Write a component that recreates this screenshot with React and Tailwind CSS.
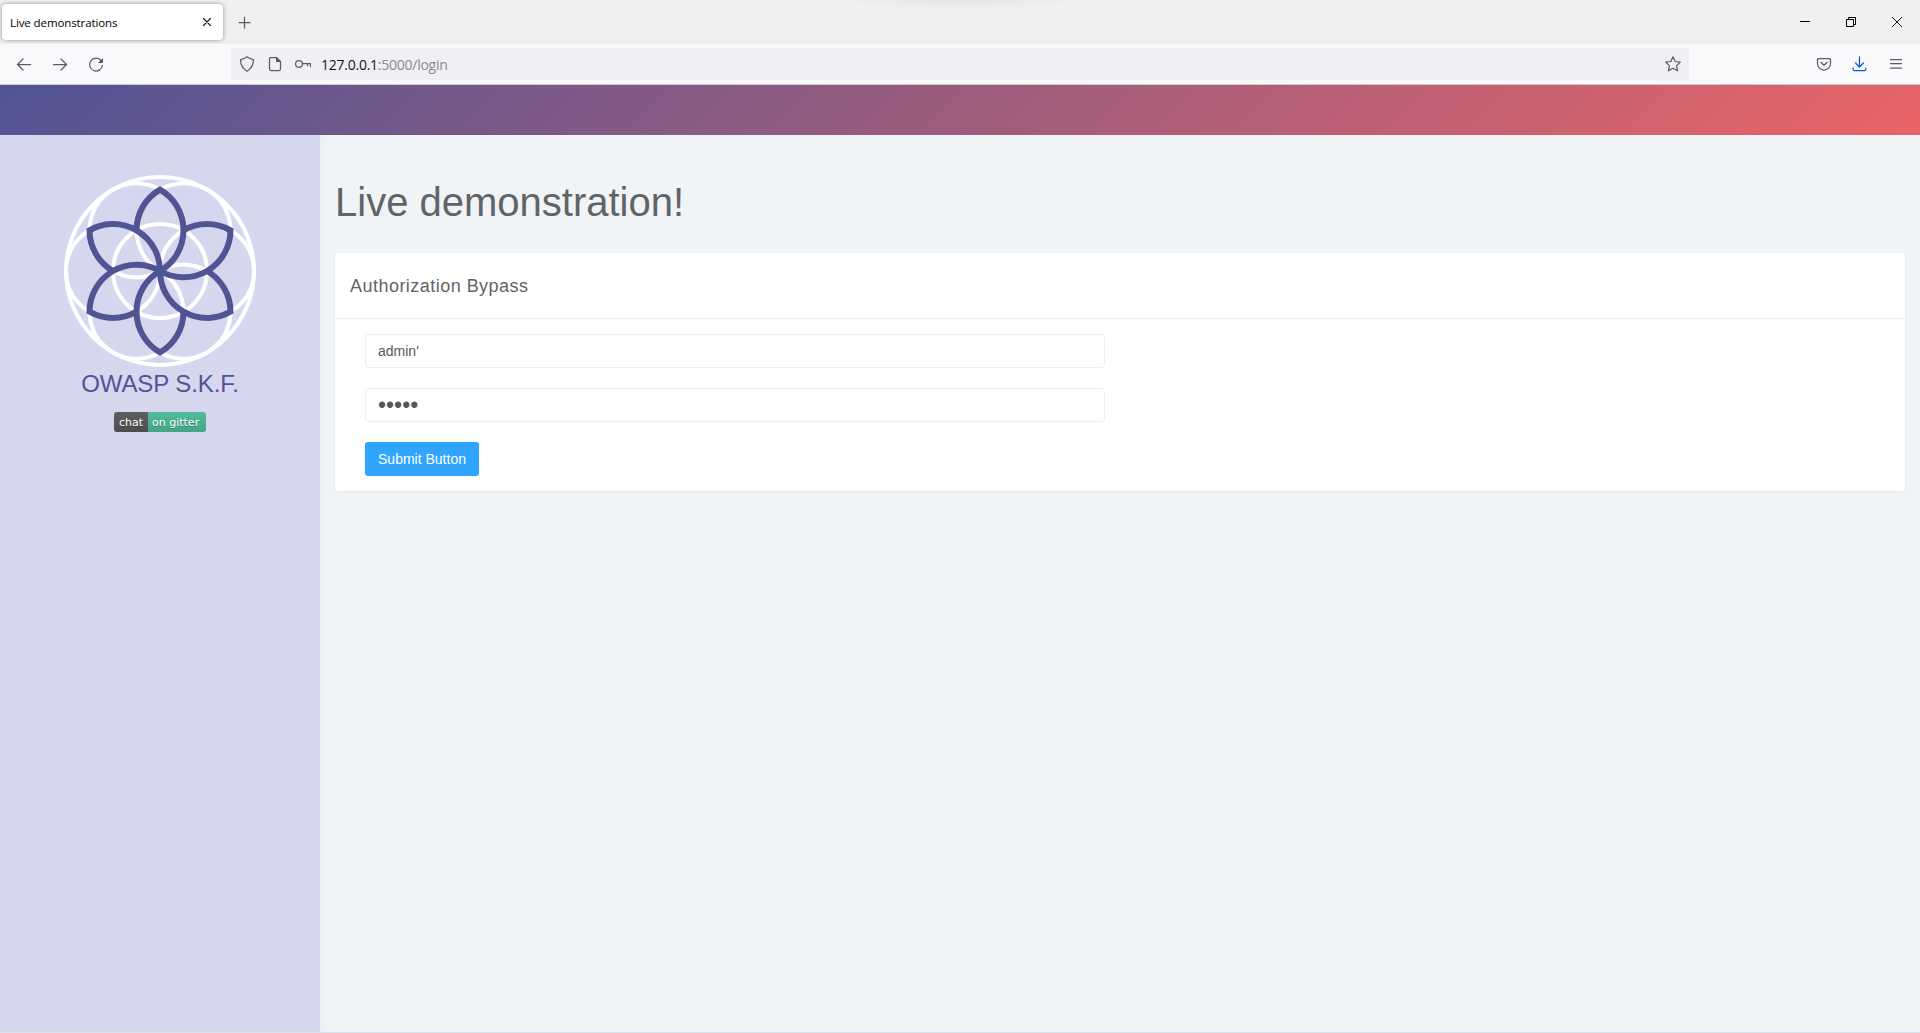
const petals = [0, 60, 120, 180, 240, 300];

function FlowerLogo() {
  return (
    <svg className="block h-[192px] w-[192px] shrink-0" viewBox="-96 -96 192 192" fill="none">
      <g stroke="#ffffff" strokeWidth="4">
        <circle r="94" />
        <circle r="47" />
        {petals.map((a) => (
          <circle key={a} cy="-47" r="47" transform={`rotate(${a + 30})`} />
        ))}
      </g>
      <g stroke="#505494" strokeWidth="6">
        {petals.map((a) => (
          <path key={a} d="M-23.5 -40.7A47 47 0 0 1 0 -81.4A47 47 0 0 1 0 0" transform={`rotate(${a})`} />
        ))}
      </g>
    </svg>
  );
}

function Icon({ children, className = "" }) {
  return (
    <svg
      className={`block h-4 w-4 shrink-0 ${className}`}
      viewBox="0 0 16 16"
      fill="none"
      stroke="currentColor"
      strokeWidth="1.25"
      strokeLinecap="round"
      strokeLinejoin="round"
    >
      {children}
    </svg>
  );
}

function TabStrip() {
  return (
    <div className="flex h-11 items-start bg-[#f0f0f0] bg-[radial-gradient(120px_8px_at_960px_0px,#e4e4e4,#f0f0f0)]">
      <div className="ml-[2px] mt-1 flex h-9 w-[221px] items-center justify-between rounded bg-white pl-2 pr-2 text-black shadow-[0_0_4px_rgba(0,0,0,0.4)]">
        <span className="mt-[2px] whitespace-nowrap font-['Open_Sans',sans-serif] text-[11.5px] tracking-[-0.1px]">Live demonstrations</span>
        <Icon className="text-[#15141a]"><path d="M4.500 4.500l7 7M11.500 4.500l-7 7" strokeWidth="1.1" /></Icon>
      </div>
      <div className="ml-[13px] mt-[14px] text-[#5b5b66]">
        <Icon><path d="M8.5 3v11M3 8.5h11" /></Icon>
      </div>
      <div className="ml-auto mr-[15px] mt-[14px] flex gap-[30px] text-black">
        <svg className="h-4 w-4" viewBox="0 0 16 16" shapeRendering="crispEdges"><path d="M3 7h10v1H3z" /></svg>
        <svg className="h-4 w-4" viewBox="0 0 16 16" fill="none" stroke="currentColor"><path d="M3.5 5.5h7v7h-7zM5.5 5.5v-2h7v7h-2" /></svg>
        <svg className="h-4 w-4" viewBox="0 0 16 16" fill="none" stroke="currentColor" strokeWidth="0.9"><path d="M3 3l10 10M13 3L3 13" /></svg>
      </div>
    </div>
  );
}

function Toolbar() {
  return (
    <div className="flex h-[41px] items-center border-b border-[#cccccc] bg-[#f9f9fb] text-[#5b5b66]">
      <div className="flex w-[231px] gap-5 pl-4">
        <Icon><path d="M14.5 8.5h-13M7 3L1.5 8.5 7 14" /></Icon>
        <Icon><path d="M1.5 8.5h13M9 3l5.500 5.500L9 14" /></Icon>
        <Icon><path d="M13 4.500A6.400 6.400 0 1 0 14.400 9.500" /><path d="M15 2v5h-5z" fill="currentColor" stroke="none" /></Icon>
      </div>
      <div className="flex h-8 w-[1458px] items-center rounded bg-[#f0f0f4] pl-2 pr-2">
        <Icon><path d="M8 .8c2 1.700 4.200 2.300 6.500 3 0 4.500-1.500 8.500-6.500 11.400C3 12.300 1.500 8.300 1.500 3.800 3.800 3.100 6 2.500 8 .800z" /></Icon>
        <Icon className="ml-3"><path d="M3.500 1.500h6l4 4v7.500a1.500 1.500 0 0 1-1.500 1.500H4A1.500 1.500 0 0 1 2.500 13V2.500a1 1 0 0 1 1-1z" /><path d="M9 1l5 5H9z" fill="currentColor" stroke="none" /></Icon>
        <Icon className="ml-3"><circle cx="4" cy="8" r="3.400" /><path d="M7.500 7.500h8v3M12.500 7.500v2" /></Icon>
        <span className="ml-[10px] mt-px whitespace-nowrap font-['Open_Sans',sans-serif] text-[14px] tracking-[-0.25px] text-[#8a8a90]"><span className="text-[#15141a]">127.0.0.1</span>:5000/login</span>
        <Icon className="ml-auto"><path d="M8 .800l2.200 4.700 5.100.600-3.700 3.500 1 5.200L8 12.300l-4.600 2.500 1-5.200L.700 6.100l5.100-.600z" /></Icon>
      </div>
      <div className="ml-auto mr-4 flex gap-5">
        <Icon><path d="M2.500 2.500h11a1 1 0 0 1 1 1V7.500a6.500 6.500 0 0 1-13 0V3.500a1 1 0 0 1 1-1zM4.800 6.300L8 9.300l3.200-3" /></Icon>
        <Icon className="text-[#0061e0]"><path d="M7.500 .800v10M3.500 7l4 4 4-4M1.200 12v1.500a1 1 0 0 0 1 1h10.600a1 1 0 0 0 1-1V12" /></Icon>
        <Icon><path d="M2.500 3.500h11M2.500 7.700h11M2.500 12h11" /></Icon>
      </div>
    </div>
  );
}

function Sidebar() {
  return (
    <aside className="flex w-[320px] shrink-0 flex-col items-center bg-[#d5d7ee] pt-10">
      <FlowerLogo />
      <div className="mt-[1px] text-2xl tracking-[-0.1px] text-[#505494]">OWASP S.K.F.</div>
      <div className="mt-3 flex h-5 overflow-hidden rounded-[3px] font-['DejaVu_Sans',sans-serif] text-[11px] leading-[21px] text-white [text-shadow:0_1px_0_rgba(1,1,1,0.3)]">
        <span className="w-[34px] bg-linear-to-b from-[#5f5f5f] to-[#4d4d4d] text-center">chat</span>
        <span className="w-[58px] bg-linear-to-b from-[#53bb9c] to-[#41a585] pl-1">on gitter</span>
      </div>
    </aside>
  );
}

function LoginCard() {
  return (
    <section className="mt-[26px] h-[238px] rounded-[3px] bg-white shadow-[0_1px_3px_rgba(0,0,0,0.06)]">
      <h2 className="h-[66px] border-b border-[#eceeef] pl-[15px] text-lg leading-[67px] tracking-[0.47px]">Authorization Bypass</h2>
      <form className="flex flex-col items-start gap-5 px-[30px] pt-[15px] text-sm" onSubmit={(e) => e.preventDefault()}>
        <input className="h-[34px] w-[740px] rounded border border-[#eceeef] px-3 text-[#55595c] outline-none" type="text" defaultValue="admin'" />
        <input className="h-[34px] w-[740px] rounded border border-[#eceeef] px-3 text-[23px] text-[#55595c] outline-none" type="password" defaultValue="admin" />
        <button className="h-[34px] w-[114px] whitespace-nowrap rounded-[3px] bg-[#30a5ff] text-white" type="submit">Submit Button</button>
      </form>
    </section>
  );
}

export default function App() {
  return (
    <div className="flex h-[1033px] w-[1920px] flex-col overflow-hidden border-b border-[#d9e1ea] bg-[#f0f4f7] font-['Liberation_Sans',Arial,sans-serif] text-[#5f6468]">
      <TabStrip />
      <Toolbar />
      <header className="h-[50px] shrink-0 bg-[linear-gradient(135deg,#505494,#e96567)]" />
      <div className="flex min-h-0 flex-1">
        <Sidebar />
        <main className="min-w-0 flex-1 px-[15px] pt-[42px] shadow-[inset_8px_0_8px_-8px_rgba(0,0,0,0.05)]">
          <h1 className="text-[40px] leading-[50px]">Live demonstration!</h1>
          <LoginCard />
        </main>
      </div>
    </div>
  );
}
